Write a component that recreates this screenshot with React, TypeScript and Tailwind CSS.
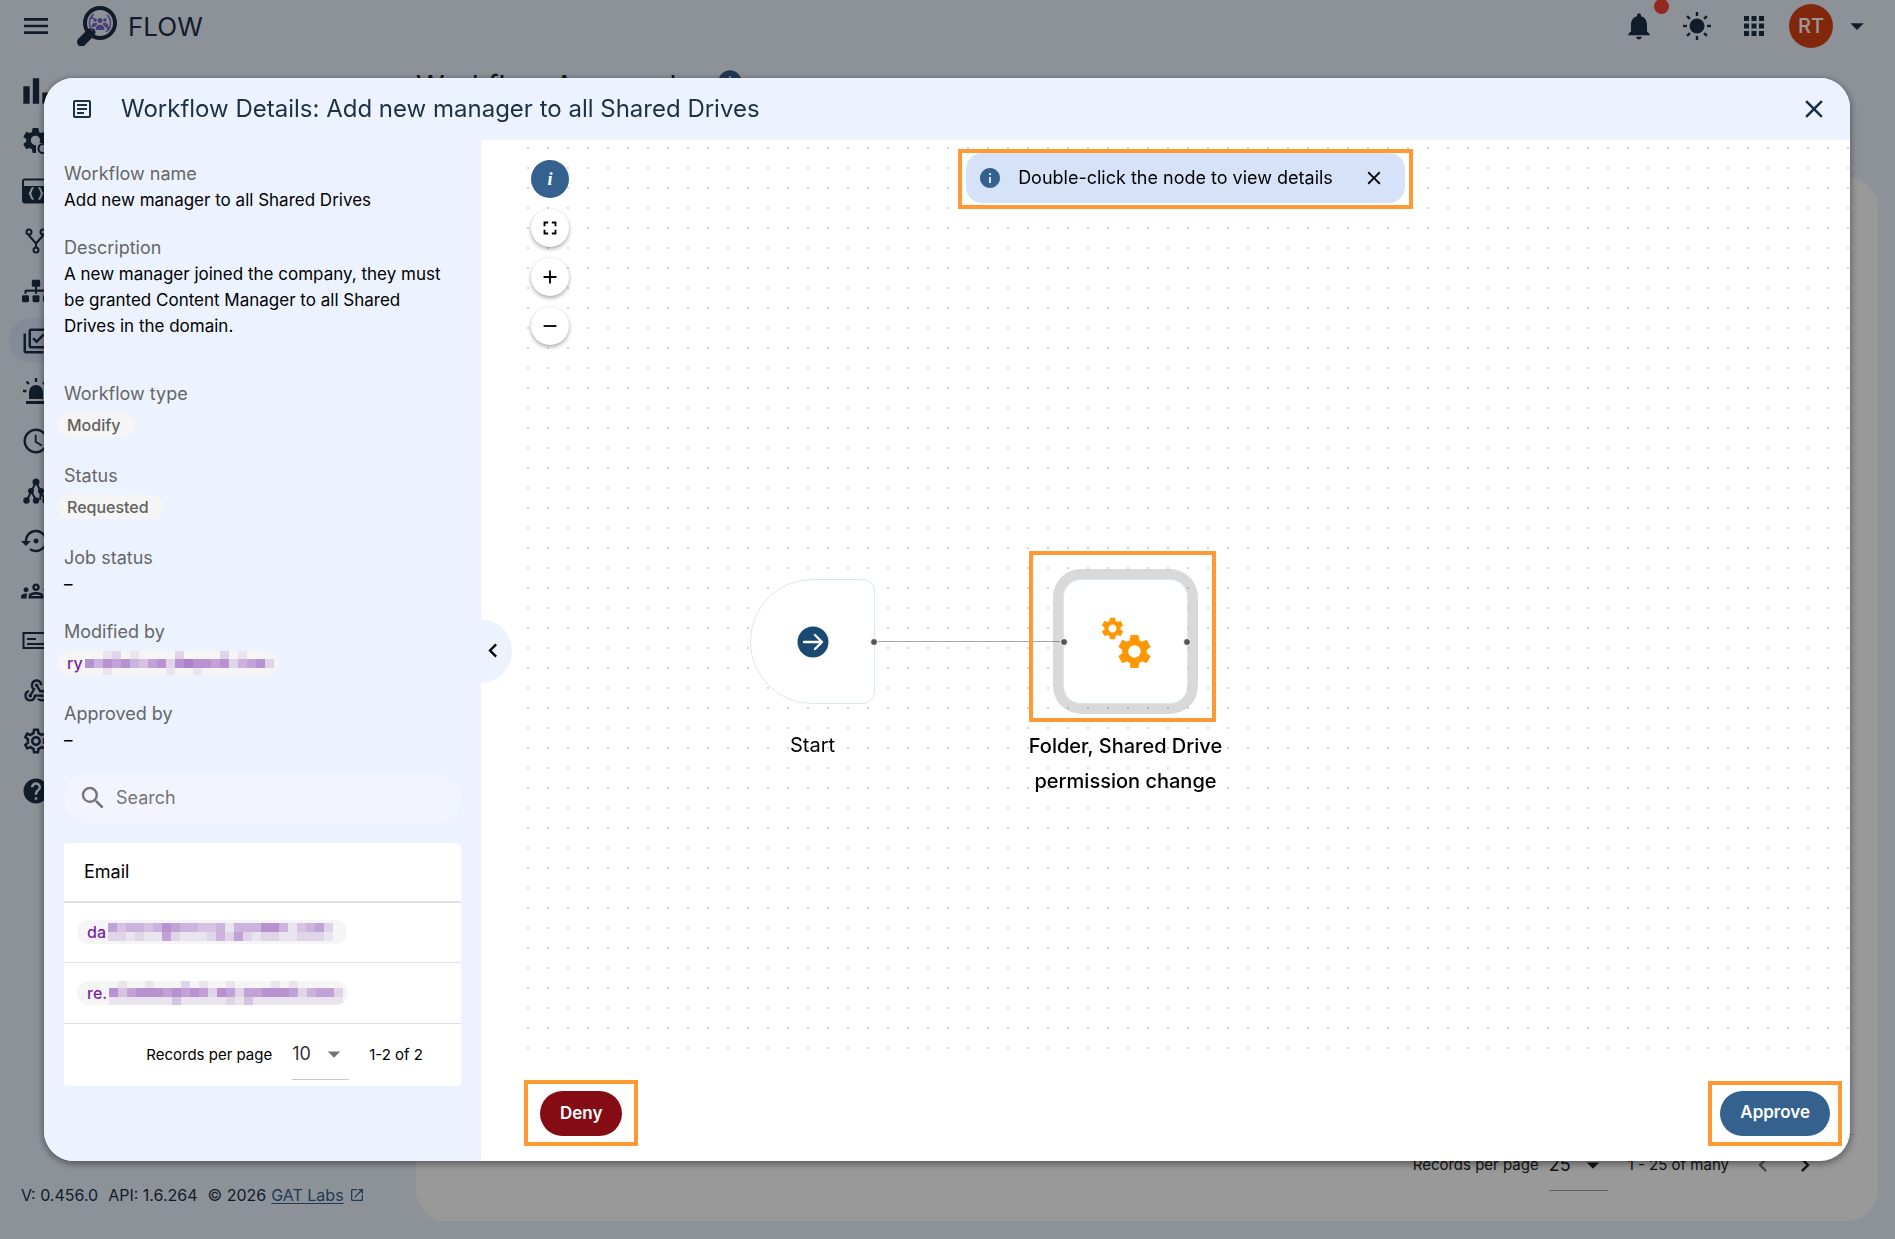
import type { ReactNode } from "react";
import {
  MdAccessTime,
  MdAdd,
  MdApps,
  MdArrowDropDown,
  MdBarChart,
  MdChevronLeft,
  MdChevronRight,
  MdClose,
  MdFullscreen,
  MdHelp,
  MdInfo,
  MdMenu,
  MdNotifications,
  MdOpenInNew,
  MdOutlineArticle,
  MdOutlineGroups,
  MdOutlineLibraryAddCheck,
  MdOutlineSettings,
  MdRemove,
  MdSearch,
  MdSettings,
  MdSettingsBackupRestore,
  MdWebhook,
} from "react-icons/md";
import { FaSitemap } from "react-icons/fa";

/* ---------- Custom icons ---------- */

function LogoIcon() {
  return (
    <svg viewBox="0 0 40 40" className="size-10" aria-hidden="true">
      <path d="M4.500 36 14 26.500" stroke="#1c3047" strokeWidth="9" strokeLinecap="round" />
      <circle cx="23" cy="17" r="15" fill="none" stroke="#1c3047" strokeWidth="4" />
      <g fill="none" stroke="#7a68c4" strokeWidth="1.500">
        <path d="M17 8a11 11 0 0 0-1 17M29 26a11 11 0 0 0 1-17" />
      </g>
      <g fill="#7a68c4">
        <path d="m12 13 3-4 2 4zM34 21l-3 4-2-4z" />
        <circle cx="18" cy="14" r="1.800" />
        <circle cx="28" cy="14" r="1.800" />
        <circle cx="23" cy="14.500" r="2.500" />
        <path d="M14.500 21c0-5 5-5 6-3l-2.500 3zM31.500 21c0-5-5-5-6-3l2.500 3zM18.500 24c0-7 9-7 9 0z" />
      </g>
    </svg>
  );
}

function SunIcon() {
  const rayos = [0, 45, 90, 135, 180, 225, 270, 315];
  return (
    <svg viewBox="0 0 28 28" className="size-7" aria-hidden="true">
      <circle cx="14" cy="14" r="7.500" fill="currentColor" />
      {rayos.map((a) => (
        <path
          key={a}
          d="M14 0v4"
          stroke="currentColor"
          strokeWidth="2.400"
          transform={`rotate(${a} 14 14)`}
        />
      ))}
    </svg>
  );
}

function GearClockIcon() {
  return (
    <svg viewBox="0 0 28 28" className="size-7" fill="currentColor" aria-hidden="true">
      <MdSettings x={-2} y={-2} size={31} />
      <path d="M14 16h14v12H14z" fill="#ecf3ff" />
      <circle cx="21" cy="21.500" r="4.500" fill="none" stroke="currentColor" strokeWidth="2" />
    </svg>
  );
}

function CodeWindowIcon() {
  return (
    <svg viewBox="0 0 28 28" className="size-7" aria-hidden="true">
      <rect x="1" y="2.500" width="26" height="23" rx="2" fill="none" stroke="currentColor" strokeWidth="2" />
      <path d="M1 9h26v16H1z" fill="currentColor" />
      <path
        d="M11.500 11c-3.500 0-1 5-4.500 5.500 3.500.5 1 5.500 4.500 5.500M16.500 11c3.500 0 1 5 4.500 5.500-3.500.5-1 5.500-4.500 5.500"
        fill="none"
        stroke="#ecf3ff"
        strokeWidth="2"
      />
    </svg>
  );
}

function ForkIcon() {
  return (
    <svg viewBox="0 0 28 28" className="size-7" fill="none" stroke="currentColor" strokeWidth="2" aria-hidden="true">
      <circle cx="7" cy="5" r="2.500" />
      <circle cx="21" cy="5" r="2.500" />
      <circle cx="14" cy="23" r="2.500" />
      <path d="M7 7.500v1l7 8v4M21 7.500v1l-7 8" />
    </svg>
  );
}

function AlarmIcon() {
  return (
    <svg viewBox="0 0 28 28" className="size-7" aria-hidden="true">
      <path d="M7 22v-7a7 7 0 0 1 14 0v7zM4 24h20v3H4z" fill="currentColor" />
      <path
        d="M14 1v4M4.500 4.500 7 7M23.500 4.500 21 7M1 14h3.500M23.500 14H27"
        stroke="currentColor"
        strokeWidth="2.400"
      />
    </svg>
  );
}

function TreeIcon() {
  return (
    <svg viewBox="0 0 28 28" className="size-7" fill="currentColor" aria-hidden="true">
      <path d="M14 5 5 23M14 5l9 18M9 14l5 9M19 14l-1 9" stroke="currentColor" strokeWidth="2" />
      <circle cx="14" cy="5" r="3.500" />
      <circle cx="9" cy="14" r="3" />
      <circle cx="19" cy="14" r="3" />
      <circle cx="4.500" cy="23.500" r="3.200" />
      <circle cx="14" cy="23.500" r="3.200" />
      <circle cx="23.500" cy="23.500" r="3.200" />
    </svg>
  );
}

function FormIcon() {
  return (
    <svg viewBox="0 0 28 28" className="size-7" fill="none" stroke="currentColor" strokeWidth="2" aria-hidden="true">
      <rect x="1.500" y="6" width="25" height="15" />
      <path d="M5 12h9M5 17h18" />
    </svg>
  );
}

/* ---------- Page behind the dialog ---------- */

const menu: { nombre: string; icono: ReactNode; activo?: boolean }[] = [
  { nombre: "Dashboard", icono: <MdBarChart size={38} /> },
  { nombre: "Automation", icono: <GearClockIcon /> },
  { nombre: "Scripts", icono: <CodeWindowIcon /> },
  { nombre: "Workflows", icono: <ForkIcon /> },
  { nombre: "Org units", icono: <FaSitemap size={28} /> },
  { nombre: "Approvals", icono: <MdOutlineLibraryAddCheck size={30} />, activo: true },
  { nombre: "Alerts", icono: <AlarmIcon /> },
  { nombre: "Scheduled", icono: <MdAccessTime size={30} /> },
  { nombre: "Events", icono: <TreeIcon /> },
  { nombre: "Recovery", icono: <MdSettingsBackupRestore size={30} /> },
  { nombre: "Groups", icono: <MdOutlineGroups size={30} /> },
  { nombre: "Forms", icono: <FormIcon /> },
  { nombre: "Webhooks", icono: <MdWebhook size={28} /> },
  { nombre: "Settings", icono: <MdOutlineSettings size={30} /> },
  { nombre: "Help", icono: <MdHelp size={30} /> },
];

function TopBar() {
  return (
    <header className="flex h-[52px] items-center pl-5 pr-[22px]">
      <button type="button" aria-label="Menu">
        <MdMenu size={32} />
      </button>
      <div className="ml-[25px] flex items-center gap-[11px]">
        <LogoIcon />
        <span className="text-[26px]">FLOW</span>
      </div>
      <div className="ml-auto flex items-center">
        <button type="button" aria-label="Notifications" className="relative">
          <MdNotifications size={32} />
          <span className="absolute -top-[11px] left-[31px] size-[15px] rounded-full bg-[#f44336]" />
        </button>
        <button type="button" aria-label="Theme" className="ml-7">
          <SunIcon />
        </button>
        <button type="button" aria-label="Apps" className="ml-7">
          <MdApps size={30} />
        </button>
        <span className="ml-5 flex size-11 items-center justify-center rounded-full bg-[#d84315] text-xl font-medium text-white">
          RT
        </span>
        <button type="button" aria-label="Account" className="ml-2">
          <MdArrowDropDown size={32} />
        </button>
      </div>
    </header>
  );
}

function BackPage() {
  return (
    <div className="flex min-h-screen flex-col">
      <TopBar />
      <div className="flex flex-1">
        <div className="flex w-[416px] flex-col justify-between pb-8 pl-[9px]">
          <nav className="flex flex-col gap-[5px] pt-4">
            {menu.map((m) => (
              <a
                key={m.nombre}
                href="#"
                aria-label={m.nombre}
                className={`flex h-[45px] w-[390px] items-center rounded-full ${m.activo ? "bg-[#dde6fc]" : ""}`}
              >
                <span className="flex w-[54px] justify-center">{m.icono}</span>
              </a>
            ))}
          </nav>
          <div className="flex items-center gap-[10px] pl-3 text-base">
            <span>V: 0.456.0</span>
            <span>API: 1.6.264</span>
            <span className="flex items-center gap-[5px]">
              © 2026
              <a href="#" className="text-[#35618e] underline underline-offset-2">
                GAT Labs
              </a>
              <MdOpenInNew size={16} className="text-[#35618e]" />
            </span>
          </div>
        </div>
        <main className="flex flex-1 flex-col pb-[18px] pr-[17px]">
          <div className="flex h-[126px] items-start gap-6 pt-3">
            <h1 className="text-[29px] text-[#222]">Workflow Approvals</h1>
            <MdInfo size={28} className="mt-1 text-[#35618e]" />
          </div>
          <div className="flex flex-1 items-end justify-end rounded-[30px] bg-white px-6 pb-[26px] text-[#222]">
            <div className="flex h-[61px] flex-1 items-center justify-end border-t border-gray-300 pr-[35px] text-[15px]">
              <label htmlFor="filas">Records per page</label>
              <div className="relative ml-[10px] flex h-[51px] w-[59px] items-center border-b border-gray-400">
                <select id="filas" className="w-full appearance-none text-lg" defaultValue="25">
                  <option>25</option>
                </select>
                <MdArrowDropDown size={30} className="pointer-events-none absolute right-0" />
              </div>
              <span className="ml-5">1 - 25 of many</span>
              <button type="button" aria-label="Previous" className="ml-5 opacity-60">
                <MdChevronLeft size={28} />
              </button>
              <button type="button" aria-label="Next" className="ml-[14px]">
                <MdChevronRight size={28} />
              </button>
            </div>
          </div>
        </main>
      </div>
    </div>
  );
}

/* ---------- Details panel ---------- */

interface MosaicProps {
  /** One string per row, each digit is the tint of a 9px cell (0-9). */
  filas: string[];
}

/** Pixelated strip that hides the rest of an address. */
function Mosaic({ filas }: MosaicProps) {
  const ancho = Math.max(...filas.map((f) => f.length)) * 9;
  const alto = filas.length * 9;
  return (
    <svg width={ancho} height={alto} className="shrink-0" shapeRendering="crispEdges" aria-hidden="true">
      {filas.map((fila, y) =>
        [...fila].map((c, x) => (
          <rect
            key={`${x}-${y}`}
            x={x * 9}
            y={y * 9}
            width="9"
            height="9"
            fill="#8e4fb8"
            fillOpacity={Number(c) / 10}
          />
        )),
      )}
    </svg>
  );
}

function Chip({ children }: { children: ReactNode }) {
  return (
    <span className="flex h-6 w-fit items-center overflow-hidden rounded-full bg-[#f5f5f5] pl-[10px] pr-[15px] text-base font-medium text-[#616161]">
      {children}
    </span>
  );
}

/** Chip with a hidden address: only the first letters can be read. */
function EmailChip({ inicio, filas }: { inicio: string; filas: string[] }) {
  return (
    <span className="flex h-6 w-fit items-center gap-[2px] overflow-hidden rounded-full bg-[#f5f5f5] pl-[10px] pr-[5px] text-base font-medium">
      <a href="#" className="text-[#7b1fa2]">
        {inicio}
      </a>
      <Mosaic filas={filas} />
    </span>
  );
}

function Campo({ label, children }: { label: string; children: ReactNode }) {
  return (
    <div>
      <dt className="text-lg leading-[27px] text-[#666]">{label}</dt>
      <dd className="text-[17px] leading-[26px]">{children}</dd>
    </div>
  );
}

function ChipRow({ children }: { children: ReactNode }) {
  return <div className="-ml-[7px] pb-1 pt-[6px]">{children}</div>;
}

function EmailTable() {
  return (
    <div className="mt-5 rounded bg-white">
      <table className="w-full border-collapse text-left">
        <thead>
          <tr className="h-[59px] border-b-2 border-[#e0e0e0]">
            <th className="pl-5 font-normal">Email</th>
          </tr>
        </thead>
        <tbody>
          <tr className="h-[60px] border-b border-[#e0e0e0]">
            <td className="pl-[13px]">
              <EmailChip
                inicio="da"
                filas={["53443465443341444664134520", "22121152111242521221122210"]}
              />
            </td>
          </tr>
          <tr className="h-[61px] border-b border-[#e0e0e0]">
            <td className="pl-[13px]">
              <EmailChip
                inicio="re."
                filas={["01001000201001000010100000", "63566656565265255666524552", "11111113111112131111111111"]}
              />
            </td>
          </tr>
        </tbody>
      </table>
      <div className="flex h-[62px] items-center justify-end pr-[38px] text-[15px]">
        <label htmlFor="porPagina">Records per page</label>
        <div className="relative ml-5 flex h-[51px] w-[57px] items-center border-b border-[#c8c8c8]">
          <select id="porPagina" className="w-full appearance-none text-lg text-[#333]" defaultValue="10">
            <option>10</option>
          </select>
          <MdArrowDropDown size={30} className="pointer-events-none absolute right-0 text-[#757575]" />
        </div>
        <span className="ml-5">1-2 of 2</span>
      </div>
    </div>
  );
}

function DetailsPanel() {
  return (
    <aside className="relative w-[437px] shrink-0 bg-[#ecf3ff] px-5 pt-5 text-lg text-black">
      <dl className="flex flex-col gap-[21px]">
        <Campo label="Workflow name">Add new manager to all Shared Drives</Campo>
        <Campo label="Description">
          <p className="mb-5 pr-3">
            A new manager joined the company, they must be granted Content Manager to all Shared
            Drives in the domain.
          </p>
        </Campo>
        <Campo label="Workflow type">
          <ChipRow>
            <Chip>Modify</Chip>
          </ChipRow>
        </Campo>
        <Campo label="Status">
          <ChipRow>
            <Chip>Requested</Chip>
          </ChipRow>
        </Campo>
        <Campo label="Job status">–</Campo>
        <Campo label="Modified by">
          <ChipRow>
            <EmailChip
              inicio="ry"
              filas={["001201000020000201000", "646564356267665624562", "001000000100100000000"]}
            />
          </ChipRow>
        </Campo>
        <Campo label="Approved by">–</Campo>
      </dl>
      <div className="mt-5 flex h-[50px] items-center rounded-full bg-[#f2f5fd] pl-[14px]">
        <MdSearch size={30} className="text-[#757575]" />
        <input
          type="search"
          aria-label="Search"
          placeholder="Search"
          className="ml-2 flex-1 bg-transparent outline-none placeholder:text-[#757575]"
        />
      </div>
      <EmailTable />
      <button
        type="button"
        aria-label="Collapse panel"
        className="absolute left-full top-1/2 z-10 flex h-[63px] w-[31px] -translate-y-1/2 items-center rounded-r-full bg-[#ecf3ff]"
      >
        <MdChevronLeft size={28} className="-ml-[2px] shrink-0" />
      </button>
    </aside>
  );
}

/* ---------- Workflow canvas ---------- */

function Handle({ className }: { className: string }) {
  return (
    <span
      className={`absolute top-1/2 size-2 -translate-y-1/2 rounded-full border border-white bg-[#555] ${className}`}
    />
  );
}

function Canvas() {
  const control =
    "flex size-[38px] items-center justify-center rounded-full bg-white shadow-[0_2px_4px_rgba(0,0,0,0.35)]";
  return (
    <div className="relative ml-10 flex-1 bg-[radial-gradient(circle,#d6d6d6_1px,transparent_1px)] bg-[size:20px_20px] bg-[position:-3px_-2px]">
      <div className="flex justify-center pt-[9px]">
        <div className="border-4 border-[#ff9933] bg-white px-1 pb-[2px]">
          <div className="flex h-[50px] items-center rounded-[16px] bg-[#d6e2f7] pl-3 pr-5 text-lg text-black">
            <MdInfo size={24} className="text-[#35618e]" />
            <span className="ml-4">Double-click the node to view details</span>
            <button type="button" aria-label="Dismiss" className="ml-[30px]">
              <MdClose size={22} />
            </button>
          </div>
        </div>
      </div>

      <div className="absolute left-[10px] top-5 flex flex-col gap-[11px] text-black">
        <button
          type="button"
          aria-label="Info"
          className="flex size-[38px] items-center justify-center rounded-full bg-[#35618e] font-['Liberation_Serif',serif] text-lg font-bold italic text-white"
        >
          i
        </button>
        <button type="button" aria-label="Fit view" className={control}>
          <MdFullscreen size={22} />
        </button>
        <button type="button" aria-label="Zoom in" className={control}>
          <MdAdd size={22} />
        </button>
        <button type="button" aria-label="Zoom out" className={control}>
          <MdRemove size={22} />
        </button>
      </div>

      <div className="absolute left-[354px] top-[501px] h-px w-[188px] bg-[#a8a8a8]" />

      <div className="absolute left-[229px] top-[439px] w-[125px]">
        <div className="relative flex h-[125px] items-center justify-center rounded-l-[62px] rounded-r-xl border border-[#dbe5fa] bg-white">
          <svg viewBox="0 0 32 32" className="size-8" aria-hidden="true">
            <circle cx="16" cy="16" r="15.500" fill="#1a4971" />
            <path
              d="M7 16h18M18 9l7 7-7 7"
              fill="none"
              stroke="#fff"
              strokeWidth="2.400"
              strokeLinecap="round"
              strokeLinejoin="round"
            />
          </svg>
          <Handle className="-right-1" />
        </div>
        <p className="mt-6 text-center text-xl leading-[35px] text-black">Start</p>
      </div>

      <div className="absolute left-[542px] top-[439px] w-[125px]">
        <div className="relative flex h-[125px] items-center justify-center rounded-[18px] border border-[#dbe5fa] bg-white shadow-[0_0_0_10px_rgba(0,0,0,0.15)]">
          <svg viewBox="0 0 52 52" className="size-[52px] text-[#ff9800]" aria-hidden="true">
            <MdSettings x={-1} y={-1} size={27} />
            <MdSettings x={14} y={15} size={41} />
          </svg>
          <Handle className="-left-1" />
          <Handle className="-right-1" />
        </div>
        <p className="-mx-10 mt-[25px] text-center text-xl font-medium leading-[35px] text-black">
          Folder, Shared Drive permission change
        </p>
      </div>
      <div className="pointer-events-none absolute left-[508px] top-[411px] h-[171px] w-[187px] border-4 border-[#ff9933]" />
    </div>
  );
}

function DialogActions() {
  return (
    <footer className="flex h-[101px] items-center justify-between pb-[7px] pl-[43px] pr-2 pt-3 text-[17px] font-semibold text-white">
      <div className="border-4 border-[#ff9933] px-3 pb-[6px] pt-[7px]">
        <button type="button" className="h-[45px] rounded-full bg-[#850c15] px-5">
          Deny
        </button>
      </div>
      <div className="border-4 border-[#ff9933] px-2 py-[6px]">
        <button type="button" className="h-[45px] rounded-full bg-[#35618e] px-5">
          Approve
        </button>
      </div>
    </footer>
  );
}

export default function App() {
  return (
    <div className="bg-[#ecf3ff] font-['Inter',sans-serif] text-[#1c3047]">
      <BackPage />
      <div className="fixed inset-0 flex bg-black/40 py-[78px] pl-11 pr-[45px]">
        <section
          role="dialog"
          aria-labelledby="titulo"
          className="flex flex-1 flex-col overflow-hidden rounded-[30px] bg-white shadow-[0_2px_8px_rgba(0,0,0,0.5)]"
        >
          <header className="flex h-[62px] shrink-0 items-center bg-[#ecf3ff] pl-[26px] pr-[21px]">
            <MdOutlineArticle size={24} />
            <h2 id="titulo" className="ml-[27px] text-2xl">
              Workflow Details: Add new manager to all Shared Drives
            </h2>
            <button type="button" aria-label="Close" className="ml-auto">
              <MdClose size={30} />
            </button>
          </header>
          <div className="flex flex-1">
            <DetailsPanel />
            <div className="flex flex-1 flex-col">
              <Canvas />
              <DialogActions />
            </div>
          </div>
        </section>
      </div>
    </div>
  );
}
